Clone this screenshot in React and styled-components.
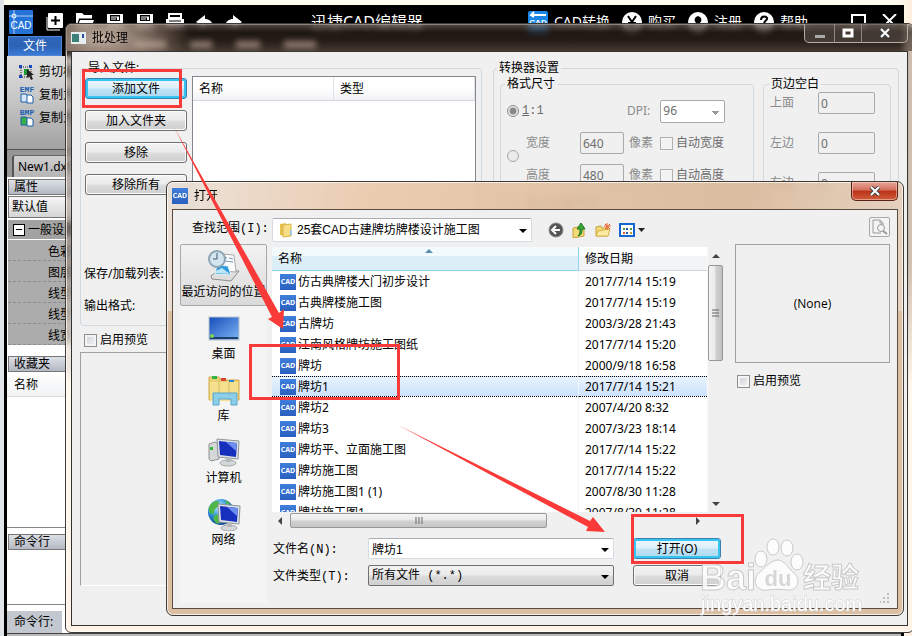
import styled, { createGlobalStyle } from "styled-components";

const GlobalStyle = createGlobalStyle`
  * {
    box-sizing: border-box;
  }
  body {
    margin: 0;
    font-family: "Noto Sans", "Noto Sans CJK SC", sans-serif;
    font-size: 12px;
    line-height: 16px;
    color: #000;
  }
  button, input, select {
    font: inherit;
    color: inherit;
    margin: 0;
  }
`;

const mono = `"Liberation Mono", "Noto Sans CJK SC", monospace`;
const sans = `"Liberation Sans", "Noto Sans CJK SC", sans-serif`;

const Desktop = styled.main`
  position: relative;
  height: 100vh;
  min-height: 636px;
  overflow: hidden;
  background: linear-gradient(90deg, #e1e5ea 4px, #fffff0 4px, #fffdf0 98%, #ffeedd);
`;

/* ---------- editor window ---------- */

const Editor = styled.section`
  position: absolute;
  left: 4px;
  right: 8px;
  top: 5px;
  bottom: 0;
  display: flex;
  flex-direction: column;
  border-left: 3px solid #000;
  border-right: 3px solid #000;
  background: #fff;
  overflow: hidden;
`;

const EditorHeader = styled.header`
  display: flex;
  align-items: center;
  flex: none;
  height: 31px;
  padding: 2px 0 0 2px;
  background: #000;
  color: #fff;
`;

const QuickTools = styled.div`
  display: flex;
  align-items: center;
  gap: 12px;
  margin-left: 13px;
`;

const EditorTitle = styled.h1`
  margin: 0 0 0 69px;
  font-size: 16px;
  line-height: 24px;
  font-weight: 400;
  white-space: nowrap;
`;

const HeaderLinks = styled.nav`
  display: flex;
  gap: 12px;
  margin-left: auto;
`;

const HeaderLink = styled.a`
  display: flex;
  align-items: center;
  gap: 6px;
  color: #fff;
  font-size: 14px;
  line-height: 20px;
  text-decoration: none;
  white-space: nowrap;
`;

const HeaderWindowTools = styled.div`
  display: flex;
  gap: 16px;
  margin: 0 4px 0 43px;
`;

const MenuRow = styled.div`
  flex: none;
  height: 20px;
  padding-left: 1px;
  background: #000;
`;

const FileTab = styled.button`
  width: 54px;
  height: 20px;
  padding: 0;
  border: 1px solid #4f86d8;
  background: linear-gradient(#2f68bd, #2d62b4 50%, #3a7bd6);
  color: #fff;
`;

const Ribbon = styled.div`
  flex: none;
  height: 93px;
  padding: 4px 0 0 12px;
  background: linear-gradient(#e0e0e0, #c4c4c4 50%, #a2a2a2);
`;

const RibbonButton = styled.button`
  display: flex;
  align-items: center;
  gap: 4px;
  height: 23px;
  padding: 0;
  border: 0;
  background: none;
  white-space: nowrap;
`;

const DocTabs = styled.div`
  flex: none;
  height: 28px;
  padding: 5px 0 0 5px;
  background: #969696;
  border-top: 1px solid #555;
`;

const DocTab = styled.button`
  width: 120px;
  height: 22px;
  padding: 0 0 0 4px;
  border: 1px solid #666;
  border-bottom: 0;
  border-left: 2px solid #555;
  border-radius: 3px 3px 0 0;
  background: linear-gradient(#d0d0d0, #b5b5b5);
  text-align: left;
  line-height: 16px;
`;

const SidePanel = styled.aside`
  display: flex;
  flex-direction: column;
  flex: 1;
  width: 220px;
  padding-top: 2px;
`;

const PanelTitle = styled.h2`
  flex: none;
  height: 16px;
  margin: 0 0 1px 1px;
  padding-left: 5px;
  border: 1px solid #777;
  background: linear-gradient(#dde0e6, #b4b8c2);
  font-size: 12px;
  line-height: 14px;
  font-weight: 400;
`;

const DefaultField = styled.div`
  height: 22px;
  margin: 0 0 2px 1px;
  padding: 2px 3px;
  border: 1px solid #777;
  background: linear-gradient(#f6f6f6, #d5d5d5);
`;

const PropGroup = styled.div`
  display: flex;
  align-items: center;
  gap: 3px;
  height: 20px;
  margin-left: 1px;
  padding-left: 5px;
  background: #a2a2a2;
  border-bottom: 1px solid #fff;
  white-space: nowrap;
`;

const Toggle = styled.button`
  width: 12px;
  height: 12px;
  padding: 0;
  border: 1px solid #000;
  background: linear-gradient(#000, #000) center / 6px 1px no-repeat #fff;
`;

const PropRow = styled.div`
  height: 21px;
  margin-left: 1px;
  padding: 4px 0 0 40px;
  background: #acacac;
  border-bottom: 1px dashed #8c8c8c;
  white-space: nowrap;
`;

const PanelGap = styled.div`
  flex: none;
  height: 11px;
`;

const PanelList = styled.div`
  flex: ${(p) => p.$grow} 1 0;
  margin-bottom: 6px;
  border-bottom: 1px solid #888;
`;

const PanelListHead = styled.div`
  height: 24px;
  padding: 4px 7px;
  background: linear-gradient(#fff, #f0f2f4);
  border-bottom: 1px solid #ddd;
`;

const CommandLabel = styled.label`
  flex: none;
  width: 55px;
  height: 22px;
  padding: 3px 0 3px 7px;
  background: #c3c8d0;
  white-space: nowrap;
`;

const StatusBar = styled.footer`
  flex: none;
  height: 3px;
  background: #b9b9b9;
  border-top: 1px solid #444;
`;

/* ---------- dialogs ---------- */

const Dialog = styled.section`
  position: absolute;
  display: flex;
  flex-direction: column;
  padding: 0 5px 6px;
  border: 1px solid #403a35;
  box-shadow: inset 0 0 0 1px rgba(255, 255, 255, 0.7);
  backdrop-filter: blur(3px);
`;

const BatchDialog = styled(Dialog)`
  left: 65px;
  right: -2px;
  top: 23px;
  bottom: 3px;
  border-radius: 6px;
  background: linear-gradient(rgba(120, 100, 86, 0.35), rgba(150, 128, 112, 0.4) 40%, rgba(255, 248, 236, 0.9) 60%, #fff3e6);
`;

const OpenDialog = styled(Dialog)`
  left: 166px;
  right: 8px;
  top: 181px;
  bottom: 20px;
  border-radius: 7px;
  background: linear-gradient(rgba(233, 205, 178, 0) 129px, #dcbfa2 129px),
    linear-gradient(100deg, rgba(232, 222, 212, 0.85), rgba(232, 197, 166, 0.88) 25%, rgba(215, 181, 148, 0.88) 70%, rgba(232, 213, 196, 0.88));
`;

const TitleBar = styled.header`
  display: flex;
  align-items: center;
  flex: none;
  height: 27px;
  gap: 6px;
`;

const BatchTitleBar = styled(TitleBar)`
  margin: 0 -5px;
  padding: 0 5px;
  border-radius: 6px 6px 0 0;
  background: radial-gradient(ellipse 90px 34px at 36px 14px, rgba(225, 205, 190, 0.85), rgba(180, 155, 140, 0.5) 60%, transparent),
    linear-gradient(rgba(110, 98, 90, 0.6), rgba(25, 16, 10, 0.6) 30%, rgba(30, 20, 15, 0.55) 60%, rgba(80, 66, 56, 0.7));
`;

const DialogTitle = styled.h2`
  margin: 0;
  font-size: 12px;
  font-weight: 400;
  line-height: 16px;
`;

const BlurredMenu = styled.div`
  display: flex;
  align-items: flex-end;
  gap: 24px;
  height: 20px;
  filter: blur(3px);
`;

const BlurredItem = styled.span`
  width: ${(p) => p.$w}px;
  height: 7px;
  background: rgba(210, 185, 170, 0.6);
`;

const CaptionButtons = styled.div`
  display: flex;
  align-self: flex-start;
  height: 19px;
  margin-left: auto;
  border: 1px solid #b4aba3;
  border-top: 0;
  border-radius: 0 0 5px 5px;
  background: rgba(100, 90, 82, 0.5);
  overflow: hidden;
`;

const CaptionButton = styled.button`
  display: flex;
  align-items: center;
  justify-content: center;
  width: ${(p) => p.$w}px;
  padding: 0;
  border: 0;
  border-right: 1px solid #8e857e;
  background: none;
  &:last-child {
    border-right: 0;
  }
`;

const CloseButton = styled.button`
  display: flex;
  align-items: center;
  justify-content: center;
  align-self: flex-start;
  width: 47px;
  height: 19px;
  margin-left: auto;
  padding: 0;
  border: 1px solid #5a2018;
  border-top: 0;
  border-radius: 0 0 5px 5px;
  background: linear-gradient(#e6a596, #d4705c 45%, #bb3218 50%, #d05c3c);
  box-shadow: inset 0 0 0 1px rgba(255, 220, 210, 0.5);
`;

const BatchBody = styled.div`
  display: flex;
  gap: 11px;
  flex: 1;
  min-height: 0;
  padding: 8px 8px 39px;
  border: 1px solid #333;
  background: #f0f0f0;
`;

const LeftColumn = styled.div`
  display: flex;
  flex-direction: column;
  width: 402px;
`;

const RightColumn = styled.div`
  flex: 1;
  min-width: 0;
`;

const Group = styled.fieldset`
  min-width: 0;
  margin: 0;
  padding: ${(p) => p.$pad};
  border: 1px solid #d0dae0;
  border-radius: 4px;
  & > legend {
    padding: 0 2px;
    margin-left: ${(p) => p.$indent}px;
  }
`;

const ImportGroup = styled(Group)`
  height: 266px;
`;

const ImportRow = styled.div`
  display: flex;
  gap: 5px;
  height: 190px;
`;

const ButtonColumn = styled.div`
  display: flex;
  flex-direction: column;
  gap: 11px;
  width: 102px;
  padding-top: 2px;
`;

const PushButton = styled.button`
  height: 21px;
  padding: 0;
  border: 1px solid #707070;
  border-radius: 3px;
  background: linear-gradient(#f3f3f3, #ebebeb 48%, #dcdcdc 52%, #cfcfcf);
  box-shadow: inset 0 0 0 1px #fbfbfb;
  line-height: 16px;
`;

const HotButton = styled(PushButton)`
  border-color: #3c7fb1;
  background: linear-gradient(#eef7fc, #dceffa 48%, #c0e3f5 52%, #abd8ef);
  box-shadow: inset 0 0 0 2px #35c5f0;
`;

const ImportTable = styled.table`
  width: 100%;
  border-spacing: 0;
  table-layout: fixed;
  th {
    height: 24px;
    padding: 0 6px;
    text-align: left;
    font-weight: 400;
    background: linear-gradient(#fff 45%, #f0f2f5);
    border-right: 1px solid #dfe3e6;
    border-bottom: 1px solid #d5d5d5;
  }
`;

const TableBox = styled.div`
  flex: 1;
  border: 1px solid #828790;
  background: #fff;
`;

const FieldLabel = styled.p`
  margin: 0 0 16px -1px;
`;

const CheckLabel = styled.label`
  display: flex;
  align-items: center;
  gap: 3px;
  color: ${(p) => (p.$muted ? "#6d6d6d" : "#000")};
  white-space: nowrap;
`;

const Check = styled.input.attrs({ type: "checkbox" })`
  appearance: none;
  flex: none;
  width: 13px;
  height: 13px;
  border: 1px solid #8e8f8f;
  background: linear-gradient(135deg, #cbcfd5, #f6f6f6);
  box-shadow: inset 0 0 0 2px #f4f4f4;
`;

const FaintCheck = styled(Check)`
  border-color: #b1b1b1;
  background: #f2f2f2;
`;

const Radio = styled.input.attrs({ type: "radio" })`
  appearance: none;
  width: 12px;
  height: 12px;
  border: 1px solid #a5a5a5;
  border-radius: 50%;
  background: #ececec;
  &:checked {
    border-color: #888;
    background: radial-gradient(circle, #888 3px, #ececec 4px);
  }
`;

const BatchPreview = styled.div`
  flex: 1;
  margin-top: 4px;
  border: 1px solid #a0a0a0;
  border-bottom-color: #fff;
`;

const PreviewCheck = styled.div`
  padding: 6px 4px 0;
`;

const SettingsRow = styled.div`
  display: flex;
  gap: 9px;
`;

const SizeGroup = styled(Group)`
  flex: 1;
  height: 250px;
`;

const MarginGroup = styled(Group)`
  width: 128px;
  height: 250px;
`;

const SizeRow = styled.div`
  display: grid;
  grid-template-columns: 19px 54px 46px 34px minmax(0, 1fr);
  align-items: center;
  height: ${(p) => p.$h}px;
  color: #8b8b8b;
`;

const DpiRow = styled.div`
  display: flex;
  align-items: center;
  height: 38px;
  padding-bottom: 4px;
  color: #8b8b8b;
`;

const RatioLabel = styled.label`
  display: flex;
  align-items: center;
  gap: 3px;
  width: 120px;
  font-family: ${mono};
  color: #6d6d6d;
`;

const DpiSelect = styled.select`
  appearance: none;
  width: 65px;
  height: 23px;
  margin-left: 10px;
  padding: 0 2px;
  border: 1px solid #aaa;
  border-radius: 2px;
  background: linear-gradient(45deg, transparent 50%, #999 50%) 51px 10px / 4px 4px no-repeat,
    linear-gradient(-45deg, transparent 50%, #999 50%) 55px 10px / 4px 4px no-repeat, #fff;
  color: #6d6d6d;
`;

const SmallInput = styled.input`
  width: ${(p) => p.$w}px;
  height: 22px;
  padding: 0 2px;
  border: 1px solid #aaa;
  border-radius: 2px;
  background: #f0f0f0;
  color: #6d6d6d;
`;

const MarginRow = styled.label`
  display: flex;
  justify-content: space-between;
  align-items: center;
  height: 22px;
  margin-bottom: 18px;
  color: #8b8b8b;
`;

/* ---------- open dialog ---------- */

const OpenBody = styled.div`
  display: grid;
  grid-template-columns: 92px minmax(0, 1fr) 155px;
  flex: 1;
  min-height: 0;
  padding: 7px 7px 5px;
  border: 1px solid #5a4c40;
  background: #f0f0f0;
`;

const PlacesColumn = styled.div`
  display: flex;
  flex-direction: column;
  padding-right: 5px;
`;

const LookLabel = styled.label`
  height: 27px;
  padding: 4px 0 0 12px;
  font-family: ${mono};
  white-space: nowrap;
`;

const Places = styled.nav`
  display: flex;
  flex-direction: column;
  flex: 1;
  background: #f4f4f4;
`;

const Place = styled.button`
  display: flex;
  flex-direction: column;
  align-items: center;
  justify-content: flex-end;
  height: 62px;
  padding: 0 0 5px;
  border: 1px solid ${(p) => (p.$active ? "#a8a8a8" : "transparent")};
  border-radius: 2px;
  background: ${(p) => (p.$active ? "linear-gradient(#f2f2f2, #dadada)" : "none")};
  white-space: nowrap;
  svg {
    flex: none;
    margin-bottom: 1px;
  }
`;

const ListColumn = styled.div`
  display: flex;
  flex-direction: column;
  padding: 0 12px 17px 0;
  min-height: 0;
`;

const LookRow = styled.div`
  display: flex;
  align-items: center;
  flex: none;
  height: 26px;
  gap: 8px;
  margin-bottom: 4px;
`;

const ComboBox = styled.div`
  position: relative;
  display: flex;
  align-items: center;
  width: ${(p) => p.$w}px;
  height: ${(p) => p.$h}px;
  padding-left: ${(p) => p.$pad || 3}px;
  border: 1px solid ${(p) => (p.$raised ? "#707070" : "#d5dbe3")};
  border-top-color: ${(p) => (p.$raised ? "#707070" : "#abadb3")};
  border-radius: 2px;
  background: ${(p) => (p.$raised ? "linear-gradient(#f2f2f2, #ebebeb 48%, #dcdcdc 52%, #cfcfcf)" : "#fff")};
  select,
  input {
    appearance: none;
    flex: 1;
    min-width: 0;
    height: 100%;
    padding: 0 16px 0 ${(p) => (p.$pad ? 4 : 0)}px;
    border: 0;
    background: none;
    font-family: ${(p) => (p.$raised ? mono : sans)};
  }
  &::after {
    content: "";
    position: absolute;
    right: 4px;
    top: calc(50% - 1px);
    border: 4px solid transparent;
    border-top-color: #000;
    border-bottom: 0;
    pointer-events: none;
  }
`;

const ToolButton = styled.button`
  display: flex;
  align-items: center;
  height: 20px;
  padding: 0;
  border: 0;
  background: none;
  &:first-of-type {
    margin-left: 8px;
  }
`;

const FileArea = styled.div`
  display: grid;
  grid-template-columns: minmax(0, 1fr) 16px;
  grid-template-rows: minmax(0, 1fr) 17px;
  flex: 1;
  min-height: 0;
`;

const FileClip = styled.div`
  overflow: hidden;
  background: #fff;
`;

const FileTable = styled.table`
  width: 100%;
  table-layout: fixed;
  border-spacing: 0;
  th {
    height: 24px;
    padding: 0 6px;
    text-align: left;
    font-weight: 400;
    background: linear-gradient(#fff 40%, #f3f4f6 40%);
    border-bottom: 1px solid #d5d5d5;
  }
  th:first-child {
    position: relative;
    background: linear-gradient(#f2fafd 40%, #dceef7 40%);
    border-bottom-color: #8fd3ee;
    border-right: 1px solid #8fd3ee;
  }
  td {
    height: 21px;
    padding: 0 6px;
    white-space: nowrap;
  }
  td:first-child {
    border-right: 1px solid #eef5fb;
  }
`;

const SortMark = styled.span`
  position: absolute;
  left: 50%;
  top: 2px;
  border: 4px solid transparent;
  border-top: 0;
  border-bottom-color: #5b8fb0;
`;

const FileRow = styled.tr`
  td {
    border-top: ${(p) => (p.$selected ? "1px dotted #000" : "0")};
    border-bottom: ${(p) => (p.$selected ? "1px dotted #000" : "0")};
    background: ${(p) => (p.$selected ? "linear-gradient(#eaf3fe, #cbe1fb)" : "none")};
  }
`;

const FileName = styled.span`
  display: flex;
  align-items: center;
  gap: 2px;
  padding-left: 2px;
`;

const CadBadge = styled.span`
  display: flex;
  align-items: center;
  justify-content: center;
  flex: none;
  width: 16px;
  height: 16px;
  background: linear-gradient(#3f7fdb, #2a5fbf);
  color: #fff;
  font-family: "Open Sans", "Noto Sans", sans-serif;
  font-size: 7px;
  line-height: 16px;
  font-weight: 700;
`;

const VScroll = styled.div`
  display: flex;
  flex-direction: column;
  align-items: center;
  padding: 7px 0 6px;
  background: #f0f0f0;
  border-left: 1px solid #fafafa;
`;

const HScroll = styled.div`
  display: flex;
  align-items: center;
  padding: 0 7px 0 6px;
  background: #f0f0f0;
`;

const VThumb = styled.div`
  display: flex;
  align-items: center;
  justify-content: center;
  width: 15px;
  height: 96px;
  margin: 7px 0 auto;
  border: 1px solid #979797;
  border-radius: 2px;
  background: linear-gradient(90deg, #f4f4f4, #e9e9e9 48%, #cfcfcf 52%, #c2c2c2);
`;

const HThumb = styled.div`
  display: flex;
  align-items: center;
  justify-content: center;
  width: 257px;
  height: 15px;
  margin: 0 auto 0 8px;
  border: 1px solid #979797;
  border-radius: 2px;
  background: linear-gradient(#f4f4f4, #e9e9e9 48%, #d2d2d2 52%, #c6c6c6);
`;

const NameForm = styled.form`
  display: grid;
  grid-template-columns: 96px minmax(0, 246px) 88px;
  row-gap: 6px;
  flex: none;
  margin-top: 9px;
`;

const FormLabel = styled.label`
  padding: 4px 0 0 1px;
  font-family: ${mono};
  line-height: 16px;
`;

const SubmitButton = styled(HotButton)`
  margin: 0 -19px 0 19px;
`;

const CancelButton = styled(PushButton)`
  margin: 0 -19px 0 19px;
`;

const PreviewColumn = styled.div`
  display: flex;
  flex-direction: column;
`;

const PreviewButton = styled.button`
  align-self: flex-end;
  width: 21px;
  height: 20px;
  margin-bottom: 7px;
  padding: 1px;
  border: 1px solid #a8a8a8;
  border-radius: 2px;
  background: #f4f4f4;
`;

const PreviewBox = styled.div`
  display: flex;
  align-items: center;
  justify-content: center;
  height: 119px;
  margin-bottom: 10px;
  border: 1px solid #a0a0a0;
  font-family: "Open Sans", "Noto Sans CJK SC", sans-serif;
`;

const PreviewToggle = styled(CheckLabel)`
  padding-left: 2px;
`;

const Grip = styled.svg`
  align-self: flex-end;
  margin-top: auto;
`;

/* ---------- marks over the windows ---------- */

const RedBox = styled.div`
  position: absolute;
  left: ${(p) => p.$x}px;
  top: ${(p) => p.$y}px;
  width: ${(p) => p.$w}px;
  height: ${(p) => p.$h}px;
  border: 3px solid #fa3a38;
  pointer-events: none;
`;

const Overlay = styled.svg`
  position: absolute;
  left: 0;
  top: 0;
  pointer-events: none;
`;

const ribbonItems = [
  { label: "剪切板", tag: "" },
  { label: "复制为", tag: "EMF" },
  { label: "复制为", tag: "BMP" },
];

const props = ["色彩", "图层", "线型", "线型", "线宽"];

const files = [
  ["仿古典牌楼大门初步设计", "2017/7/14 15:19"],
  ["古典牌楼施工图", "2017/7/14 15:19"],
  ["古牌坊", "2003/3/28 21:43"],
  ["江南风格牌坊施工图纸", "2017/7/14 15:20"],
  ["牌坊", "2000/9/18 16:58"],
  ["牌坊1", "2017/7/14 15:21"],
  ["牌坊2", "2007/4/20 8:32"],
  ["牌坊3", "2007/3/23 18:14"],
  ["牌坊平、立面施工图", "2017/7/14 15:22"],
  ["牌坊施工图", "2017/7/14 15:22"],
  ["牌坊施工图1 (1)", "2007/8/30 11:28"],
  ["牌坊施工图1", "2007/8/30 11:28"],
];

const CadLogo = () => (
  <svg width="24" height="24" viewBox="0 0 24 24">
    <rect width="24" height="24" rx="1" fill="#2673d8" />
    <path d="M5 0v24M0 6h24" stroke="#a8cdf8" />
    <circle cx="5" cy="6" r="2" fill="none" stroke="#fff" />
    <text x="12" y="19" fontSize="10" textAnchor="middle" fill="#fff" fontFamily="Liberation Sans">CAD</text>
  </svg>
);

const RibbonIcon = ({ tag }) => (
  <svg width="16" height="18" viewBox="0 0 16 18">
    {tag ? (
      <>
        <text x="8" y="6" fontSize="8" fontWeight="700" textAnchor="middle" fill="#1c60b0" fontFamily="Liberation Mono">{tag}</text>
        <path d="M2 8h5l2 2v6H2z" fill={tag === "BMP" ? "#35b04a" : "#d8e8fa"} stroke="#1f5eaa" />
        <path d="M8 9h4l2 2v6H8z" fill="#fff" stroke="#1f5eaa" />
      </>
    ) : (
      <>
        <rect x="2" y="4" width="10" height="10" fill="none" stroke="#222" strokeDasharray="1 1" />
        <path d="M0 2h3v3H0zM10 2h3v3h-3zM0 12h3v3H0z" fill="#1846c0" />
        <path d="M5 6h5v6H5z" fill="#1d9a33" />
        <path d="M8 6v9l2-2 2 4 2-1-2-4h3z" fill="#222" />
      </>
    )}
  </svg>
);

const BoxPlus = () => (
  <svg width="18" height="18" viewBox="0 0 18 18">
    <path d="M1 4v13h13" fill="none" stroke="#fff" strokeWidth="1" />
    <rect x="2" y="0" width="15" height="15" rx="1" fill="#fff" />
    <path d="M9.500 3v9M5 7.500h9" stroke="#000" strokeWidth="2" />
  </svg>
);

const FolderTool = () => (
  <svg width="18" height="18" viewBox="0 0 18 18">
    <path d="M0 0h6l2 2h8v4H3L0 14z" fill="#fff" />
    <path d="M3 6h13" stroke="#000" />
    <path d="M4 7h14l-3 8H1z" fill="#fff" />
  </svg>
);

const SaveTool = () => (
  <svg width="18" height="18" viewBox="0 0 18 18">
    <path d="M1 1h16v15H1z" fill="#fff" />
    <path d="M4 2h10v6H4z" fill="#000" />
    <path d="M5 4h8M5 6h5" stroke="#fff" />
    <path d="M11 4h2v3h-2z" fill="#fff" />
  </svg>
);

const PrintTool = () => (
  <svg width="18" height="18" viewBox="0 0 18 18">
    <path d="M3 1h12v4H3z" fill="none" stroke="#fff" strokeWidth="2" />
    <path d="M0 6h18v8H0z" fill="#fff" />
    <path d="M3 8h12" stroke="#000" />
  </svg>
);

const ArrowTool = ({ flip }) => (
  <svg width="17" height="18" viewBox="0 0 17 18">
    <path d="M0 9l9-7v4c4 0 7 2 8 7-2-3-5-3-8-3v5z" fill="#fff" transform={flip ? "translate(17 0) scale(-1 1)" : undefined} />
  </svg>
);

const CircleIcon = ({ kind }) => (
  <svg width="20" height="20" viewBox="0 0 20 20">
    <circle cx="10" cy="10" r="10" fill="#fff" />
    {kind === "yen" && <path d="M6 4l4 6 4-6M10 10v7M6 11h8M6 14h8" fill="none" stroke="#000" strokeWidth="2" />}
    {kind === "user" && <path d="M10 4a4 4 0 0 1 2 7l4 3H4l4-3a4 4 0 0 1 2-7z" fill="#000" />}
    {kind === "help" && <path d="M7 8c0-5 7-4 6-1-1 2-3 2-3 5M10 14v2" fill="none" stroke="#000" strokeWidth="2" />}
  </svg>
);

const ConvertIcon = () => (
  <svg width="20" height="22" viewBox="0 0 20 22">
    <rect width="20" height="22" rx="2" fill="#1c86e8" />
    <path d="M18 4H4M6 1L3 4l3 2" fill="none" stroke="#fff" strokeWidth="2" />
    <text x="10" y="14" fontSize="8" fontWeight="700" textAnchor="middle" fill="#fff" fontFamily="Liberation Sans">CAD</text>
  </svg>
);

const CrossIcon = () => (
  <svg width="12" height="10" viewBox="0 0 12 10">
    <path d="M2 1l8 8M10 1L2 9" stroke="#444" strokeWidth="4" />
    <path d="M2 1l8 8M10 1L2 9" stroke="#fff" strokeWidth="2" />
  </svg>
);

const FolderIcon = () => (
  <svg width="14" height="16" viewBox="0 0 14 16">
    <path d="M1 2l6-1v14l-6-2z" fill="#e5c04f" />
    <path d="M4 3l8-1v12l-8 1z" fill="#f7de85" stroke="#dcb44a" />
    <path d="M11 8h2v5h-2z" fill="#9fc8ea" />
  </svg>
);

const Monitor = ({ x, y }) => (
  <g transform={`translate(${x} ${y})`}>
    <path d="M0 0l22 2-1 18-20-2z" fill="#dfe3e6" stroke="#8d9499" />
    <path d="M2 2l18 2-1 14-16-2z" fill="#1630bd" />
    <path d="M9 3l11 1-1 8z" fill="#6f8ff0" />
    <ellipse cx="11" cy="24" rx="8" ry="3" fill="#d5d8da" stroke="#a5a8aa" />
    <path d="M9 19h5v4H9z" fill="#b5b9bc" />
  </g>
);

const PlaceIcon = ({ kind }) => (
  <svg width="34" height="34" viewBox="0 0 34 34">
    <defs>
      <linearGradient id="screen" x1="0" y1="0" x2="1" y2="1">
        <stop offset="0" stopColor="#164cb8" />
        <stop offset="1" stopColor="#7cb7f5" />
      </linearGradient>
      <radialGradient id="globe" cx="0.4" cy="0.3" r="0.8">
        <stop offset="0" stopColor="#b6ecff" />
        <stop offset="0.5" stopColor="#2a8cd8" />
        <stop offset="1" stopColor="#083a80" />
      </radialGradient>
    </defs>
    {kind === "recent" && (
      <>
        <path d="M4 27l8-6 20 1-8 10-19-2z" fill="#dedede" stroke="#8c8c8c" />
        <path d="M15 5l12 1 2 17-13-1z" fill="#fcfcfc" stroke="#aaa" />
        <path d="M17 8l3 1M22 9l4 1M18 12l8 1" stroke="#6f98c0" />
        <path d="M10 16l11 1 3 9-16-1z" fill="#2f9bdc" stroke="#e8f4fa" />
        <path d="M9 22l6-3 8 6-15-1z" fill="#bfe6f5" />
        <circle cx="10" cy="10" r="8" fill="#d3e5ef" stroke="#8da4b3" strokeWidth="2" />
        <path d="M10 4v6H6" fill="none" stroke="#375b72" />
      </>
    )}
    {kind === "desktop" && (
      <>
        <rect x="2" y="6" width="30" height="23" fill="url(#screen)" stroke="#b9c3cc" />
        <path d="M3 26h28v2H3z" fill="#1e3d68" />
        <circle cx="5" cy="25" r="2" fill="#7fd15b" />
      </>
    )}
    {kind === "library" && (
      <>
        <path d="M2 4h10l2 3h18v20H2z" fill="#ecd077" stroke="#d2aa45" />
        <path d="M5 3h5v3H5z" fill="#2fb344" />
        <path d="M14 5h5v3h-5z" fill="#d94436" />
        <path d="M22 7h5v3h-5z" fill="#2b80d0" />
        <path d="M3 9h28v19H3z" fill="#f5e08f" />
        <path d="M12 7v20M22 9v18" stroke="#d9bc60" />
        <path d="M6 32V20h24v12h-6v-6H12v6z" fill="#8ccdea" stroke="#5aa6ca" />
      </>
    )}
    {kind === "computer" && (
      <>
        <path d="M2 9l6-2 4 2v15l-8 2-2-2z" fill="#d5d7d8" stroke="#8e9294" />
        <path d="M3 12h3v3H3z" fill="#35b835" />
        <Monitor x={10} y={4} />
      </>
    )}
    {kind === "network" && (
      <>
        <circle cx="14" cy="15" r="13" fill="url(#globe)" />
        <path d="M5 6c6-4 8-1 7 2s-5 3-5 7-4 2-5-1 1-6 3-8zM8 18c5-1 7 2 6 6l-3 3c-4-2-6-6-3-9zM18 3l5 3-3 3z" fill="#4fb748" />
        <g transform="translate(1 3)">
          <Monitor x={10} y={4} />
        </g>
      </>
    )}
  </svg>
);

const places = [
  ["recent", "最近访问的位置"],
  ["desktop", "桌面"],
  ["library", "库"],
  ["computer", "计算机"],
  ["network", "网络"],
];

const EditorWindow = () => (
  <Editor>
    <EditorHeader>
      <CadLogo />
      <QuickTools>
        <BoxPlus />
        <FolderTool />
        <SaveTool />
        <SaveTool />
        <PrintTool />
        <ArrowTool />
        <ArrowTool flip />
      </QuickTools>
      <EditorTitle>迅捷CAD编辑器</EditorTitle>
      <HeaderLinks>
        <HeaderLink href="#convert"><ConvertIcon />CAD转换</HeaderLink>
        <HeaderLink href="#buy"><CircleIcon kind="yen" />购买</HeaderLink>
        <HeaderLink href="#register"><CircleIcon kind="user" />注册</HeaderLink>
        <HeaderLink href="#help"><CircleIcon kind="help" />帮助</HeaderLink>
      </HeaderLinks>
      <HeaderWindowTools>
        <svg width="15" height="16" viewBox="0 0 15 16">
          <path d="M1 1h13v12H1z" fill="none" stroke="#fff" strokeWidth="2" />
        </svg>
        <svg width="15" height="16" viewBox="0 0 15 16">
          <path d="M1 0l13 13M14 0L1 13" stroke="#fff" strokeWidth="2" />
        </svg>
      </HeaderWindowTools>
    </EditorHeader>
    <MenuRow>
      <FileTab>文件</FileTab>
    </MenuRow>
    <Ribbon>
      {ribbonItems.map((item, i) => (
        <RibbonButton key={i}>
          <RibbonIcon tag={item.tag} />
          {item.label}
        </RibbonButton>
      ))}
    </Ribbon>
    <DocTabs>
      <DocTab>New1.dxf</DocTab>
    </DocTabs>
    <SidePanel>
      <PanelTitle>属性</PanelTitle>
      <DefaultField>默认值</DefaultField>
      <PropGroup>
        <Toggle aria-label="折叠" />
        一般设置
      </PropGroup>
      {props.map((p, i) => (
        <PropRow key={i}>{p}</PropRow>
      ))}
      <PanelGap />
      <PanelTitle>收藏夹</PanelTitle>
      <PanelList $grow={156}>
        <PanelListHead>名称</PanelListHead>
      </PanelList>
      <PanelTitle>命令行</PanelTitle>
      <PanelList $grow={54} />
      <CommandLabel>命令行:</CommandLabel>
    </SidePanel>
    <StatusBar />
  </Editor>
);

const BatchWindow = () => (
  <BatchDialog>
    <BatchTitleBar>
      <svg width="15" height="12" viewBox="0 0 15 12">
        <rect width="15" height="12" fill="#e8eef0" />
        <rect x="1" y="2" width="7" height="8" fill="#3d8078" />
        <path d="M11 2h2v4h-2z" fill="#2b4f9c" />
      </svg>
      <DialogTitle>批处理</DialogTitle>
      <BlurredMenu aria-hidden="true">
        {[32, 22, 24, 32].map((w, i) => (
          <BlurredItem key={i} $w={w} />
        ))}
      </BlurredMenu>
      <CaptionButtons>
        <CaptionButton $w={30} aria-label="最小化">
          <svg width="12" height="10" viewBox="0 0 12 10">
            <path d="M1 7h10v3H1z" fill="#aaa" />
          </svg>
        </CaptionButton>
        <CaptionButton $w={27} aria-label="最大化">
          <svg width="12" height="10" viewBox="0 0 12 10">
            <path d="M2 2h8v6H2z" fill="none" stroke="#fff" strokeWidth="3" />
          </svg>
        </CaptionButton>
        <CaptionButton $w={45} aria-label="关闭">
          <CrossIcon />
        </CaptionButton>
      </CaptionButtons>
    </BatchTitleBar>
    <BatchBody>
      <LeftColumn>
        <ImportGroup $pad="0 5px 0 4px" $indent={1}>
          <legend>导入文件:</legend>
          <ImportRow>
            <ButtonColumn>
              <HotButton>添加文件</HotButton>
              <PushButton>加入文件夹</PushButton>
              <PushButton>移除</PushButton>
              <PushButton>移除所有</PushButton>
            </ButtonColumn>
            <TableBox>
              <ImportTable>
                <thead>
                  <tr>
                    <th>名称</th>
                    <th>类型</th>
                  </tr>
                </thead>
              </ImportTable>
            </TableBox>
          </ImportRow>
          <FieldLabel>保存/加载列表:</FieldLabel>
          <FieldLabel>输出格式:</FieldLabel>
        </ImportGroup>
        <PreviewCheck>
          <CheckLabel>
            <Check />
            启用预览
          </CheckLabel>
        </PreviewCheck>
        <BatchPreview />
      </LeftColumn>
      <RightColumn>
        <Group $pad="0 7px 7px 6px" $indent={-3}>
          <legend>转换器设置</legend>
          <SettingsRow>
            <SizeGroup $pad="2px 6px 0" $indent={-2}>
              <legend>格式尺寸</legend>
              <DpiRow>
                <RatioLabel>
                  <Radio name="size" defaultChecked />
                  <span><u>1</u>:1</span>
                </RatioLabel>
                <label htmlFor="dpi">DPI:</label>
                <DpiSelect id="dpi">
                  <option>96</option>
                </DpiSelect>
              </DpiRow>
              <SizeRow $h={16}>
                <span />
                <label htmlFor="w">宽度</label>
                <SmallInput id="w" $w={44} defaultValue="640" />
                <span>&nbsp;像素</span>
                <CheckLabel $muted><FaintCheck />自动宽度</CheckLabel>
              </SizeRow>
              <SizeRow $h={16}>
                <Radio name="size" aria-label="宽度和高度" />
              </SizeRow>
              <SizeRow $h={16}>
                <span />
                <label htmlFor="h">高度</label>
                <SmallInput id="h" $w={44} defaultValue="480" />
                <span>&nbsp;像素</span>
                <CheckLabel $muted><FaintCheck />自动高度</CheckLabel>
              </SizeRow>
              <SizeRow $h={48}>
                <Radio name="size" id="max" />
                <CheckLabel $muted htmlFor="max">最大可能尺寸</CheckLabel>
              </SizeRow>
            </SizeGroup>
            <MarginGroup $pad="0 15px 0 6px" $indent={-1}>
              <legend>页边空白</legend>
              {["上面", "左边", "右边"].map((side) => (
                <MarginRow key={side}>
                  {side}
                  <SmallInput $w={57} defaultValue="0" />
                </MarginRow>
              ))}
            </MarginGroup>
          </SettingsRow>
        </Group>
      </RightColumn>
    </BatchBody>
  </BatchDialog>
);

const OpenWindow = () => (
  <OpenDialog>
    <TitleBar>
      <CadBadge>CAD</CadBadge>
      <DialogTitle>打开</DialogTitle>
      <CloseButton aria-label="关闭">
        <CrossIcon />
      </CloseButton>
    </TitleBar>
    <OpenBody>
      <PlacesColumn>
        <LookLabel htmlFor="look">查找范围(I):</LookLabel>
        <Places>
          {places.map(([kind, label], i) => (
            <Place key={kind} $active={i === 0}>
              <PlaceIcon kind={kind} />
              {label}
            </Place>
          ))}
        </Places>
      </PlacesColumn>
      <ListColumn>
        <LookRow>
          <ComboBox $w={260} $h={24} $pad={6}>
            <FolderIcon />
            <select id="look">
              <option>25套CAD古建牌坊牌楼设计施工图</option>
            </select>
          </ComboBox>
          <ToolButton aria-label="后退">
            <svg width="16" height="16" viewBox="0 0 16 16">
              <circle cx="8" cy="8" r="7" fill="#555" stroke="#888" />
              <path d="M12 8H5M8 4L4 8l4 4" fill="none" stroke="#fff" strokeWidth="2" />
            </svg>
          </ToolButton>
          <ToolButton aria-label="向上一级">
            <svg width="15" height="16" viewBox="0 0 15 16">
              <path d="M1 6l5-1 1 1h5v8l-11 2z" fill="#f3d978" stroke="#c9a23c" />
              <path d="M6 14c4-1 4-4 4-7h3L9 1 5 7h3c0 3 0 5-2 7z" fill="#35a835" stroke="#1c7a20" />
            </svg>
          </ToolButton>
          <ToolButton aria-label="新建文件夹">
            <svg width="16" height="16" viewBox="0 0 16 16">
              <path d="M1 5l5-1 1 2h6v8H1z" fill="#f3d978" stroke="#c9a23c" />
              <path d="M3 9l12-2-2 7H1z" fill="#fbeaa3" stroke="#d5b24c" />
              <path d="M12 1v7M9 4h7M10 2l5 5M15 2l-5 5" stroke="#f0602c" />
            </svg>
          </ToolButton>
          <ToolButton aria-label="视图">
            <svg width="26" height="16" viewBox="0 0 26 16">
              <rect x="1" y="2" width="14" height="12" fill="#fff" stroke="#1565d0" strokeWidth="2" />
              <path d="M4 6h2v2H4zM11 6h2v2h-2z" fill="#4a9a40" />
              <path d="M4 10h2v2H4z" fill="#e05a28" />
              <path d="M7 6h2v2H7zM7 10h2v2H7z" fill="#2358b8" />
              <path d="M11 10h2v2h-2z" fill="#c99a20" />
              <path d="M19 6h7l-3.500 4z" fill="#222" />
            </svg>
          </ToolButton>
        </LookRow>
        <FileArea>
          <FileClip>
            <FileTable>
              <colgroup>
                <col />
                <col width="128" />
              </colgroup>
              <thead>
                <tr>
                  <th>名称<SortMark /></th>
                  <th>修改日期</th>
                </tr>
              </thead>
              <tbody>
                {files.map(([name, date]) => (
                  <FileRow key={name} $selected={name === "牌坊1"}>
                    <td>
                      <FileName>
                        <CadBadge>CAD</CadBadge>
                        {name}
                      </FileName>
                    </td>
                    <td>{date}</td>
                  </FileRow>
                ))}
              </tbody>
            </FileTable>
          </FileClip>
          <VScroll>
            <svg width="8" height="4"><path d="M0 4l4-4 4 4z" fill="#444" /></svg>
            <VThumb>
              <svg width="7" height="8"><path d="M0 1h7M0 4h7M0 7h7" stroke="#666" /></svg>
            </VThumb>
            <svg width="8" height="4"><path d="M0 0l4 4 4-4z" fill="#444" /></svg>
          </VScroll>
          <HScroll>
            <svg width="4" height="8"><path d="M4 0L0 4l4 4z" fill="#444" /></svg>
            <HThumb>
              <svg width="8" height="7"><path d="M1 0v7M4 0v7M7 0v7" stroke="#666" /></svg>
            </HThumb>
            <svg width="4" height="8"><path d="M0 0l4 4-4 4z" fill="#444" /></svg>
          </HScroll>
        </FileArea>
        <NameForm onSubmit={(e) => e.preventDefault()}>
          <FormLabel htmlFor="fname">文件名(N):</FormLabel>
          <ComboBox $h={21}>
            <input id="fname" defaultValue="牌坊1" />
          </ComboBox>
          <SubmitButton type="submit">打开(O)</SubmitButton>
          <FormLabel htmlFor="ftype">文件类型(T):</FormLabel>
          <ComboBox $h={21} $raised>
            <select id="ftype">
              <option>所有文件 (*.*)</option>
            </select>
          </ComboBox>
          <CancelButton type="button">取消</CancelButton>
        </NameForm>
      </ListColumn>
      <PreviewColumn>
        <PreviewButton aria-label="预览">
          <svg width="17" height="16" viewBox="0 0 17 16">
            <path d="M10 14H2V1h7l3 3v2M9 1v3h3" fill="none" stroke="#999" />
            <circle cx="10" cy="9" r="3.500" fill="#f4f4f4" stroke="#999" />
            <path d="M12 12l4 3" stroke="#999" strokeWidth="2" />
          </svg>
        </PreviewButton>
        <PreviewBox>(None)</PreviewBox>
        <PreviewToggle>
          <Check />
          启用预览
        </PreviewToggle>
        <Grip width="10" height="10" viewBox="0 0 10 10">
          <path d="M7 0h2v2H7zM7 4h2v2H7zM7 8h2v2H7zM3 4h2v2H3zM3 8h2v2H3zM0 8h1v2H0z" fill="#bbb" />
        </Grip>
      </PreviewColumn>
    </OpenBody>
  </OpenDialog>
);

const Watermark = () => (
  <g fill="#fff" fillOpacity="0.8" stroke="#c8c8c8" strokeWidth="1" fontFamily="Liberation Sans" fontWeight="700">
    <text x="700" y="590" fontSize="36">Bai</text>
    <ellipse cx="761" cy="559" rx="6" ry="8" />
    <ellipse cx="773" cy="547" rx="6" ry="8" />
    <ellipse cx="787" cy="548" rx="6" ry="8" />
    <ellipse cx="797" cy="562" rx="6" ry="8" />
    <path d="M778 560c6 0 10 8 16 13 8 7 3 18-6 17-6-1-14-1-20 0-11 2-18-9-8-18 6-5 11-12 18-12z" />
    <text x="778" y="586" fontSize="22" textAnchor="middle" fill="#cdcdcd" stroke="none">du</text>
    <text x="803" y="588" fontSize="28" fontFamily="Noto Sans CJK SC">经验</text>
    <text x="701" y="611" fontSize="20" fontWeight="400" fillOpacity="1" stroke="#cfcfcf" paintOrder="stroke">jingyan.baidu.com</text>
  </g>
);

const App = () => {
  return (
    <>
      <GlobalStyle />
      <Desktop>
        <EditorWindow />
        <BatchWindow />
        <OpenWindow />
        <Overlay width="912" height="636" viewBox="0 0 912 636">
          <Watermark />
          <path d="M174 127L279 313l5-4-1 20-15-10 4-2z" fill="#fa3a38" />
          <path d="M398 425L590 521l3-4 12 15-19-1 2-4z" fill="#fa3a38" />
        </Overlay>
        <RedBox $x={82} $y={69} $w={100} $h={39} />
        <RedBox $x={249} $y={344} $w={151} $h={56} />
        <RedBox $x={631} $y={514} $w={113} $h={50} />
      </Desktop>
    </>
  );
};

export default App;
